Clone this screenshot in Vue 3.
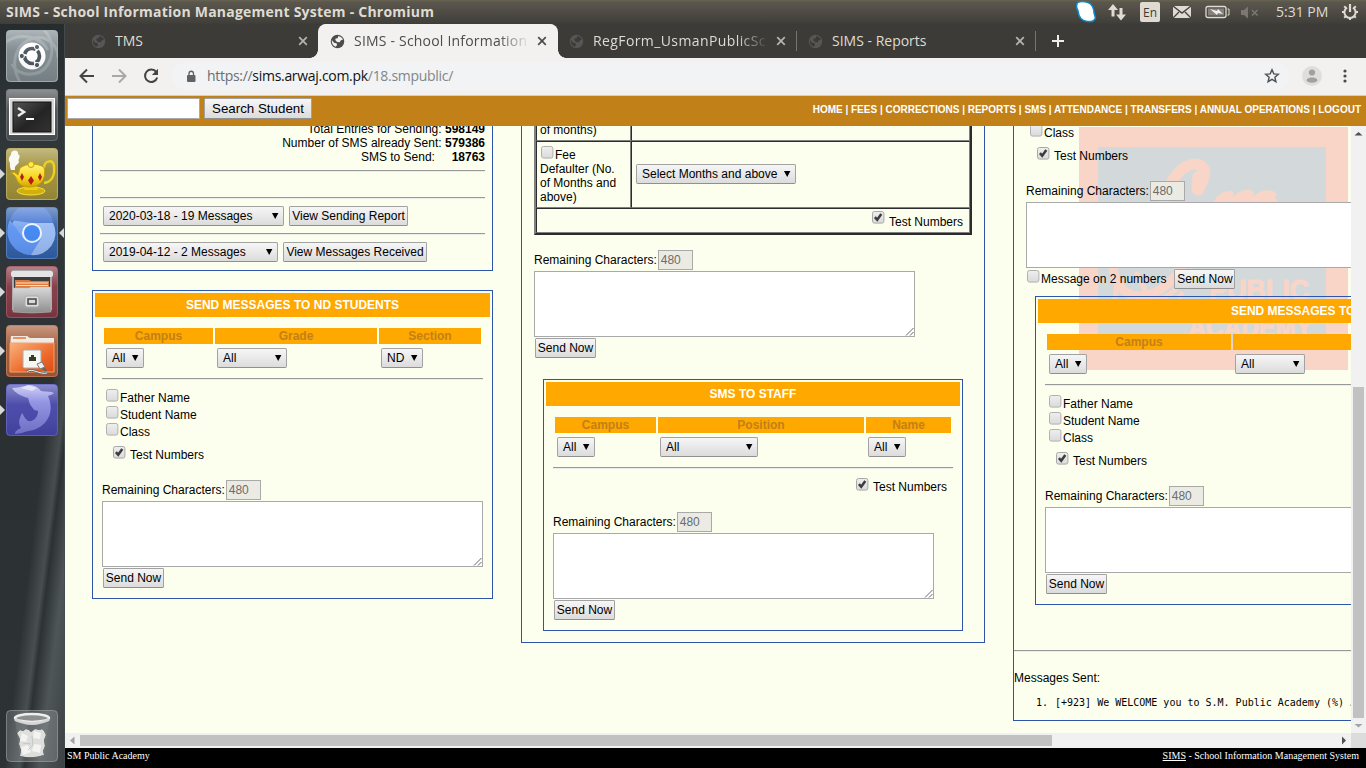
<script setup>
const tabs = [
  { title: 'TMS', cls: 't1' },
  { title: 'SIMS - School Information', cls: 't2', active: true },
  { title: 'RegForm_UsmanPublicSc', cls: 't3', sep: true },
  { title: 'SIMS - Reports', cls: 't4', sep: true }
]
const fields = ['Father Name', 'Student Name', 'Class']
</script>

<template>
  <div class="screen">
    <svg class="defs" width="0" height="0">
      <defs>
        <linearGradient id="gloss" x1="0" y1="0" x2="0" y2="1">
          <stop offset="0" stop-color="#fff" stop-opacity=".38" />
          <stop offset=".4" stop-color="#fff" stop-opacity=".04" />
          <stop offset="1" stop-color="#000" stop-opacity=".08" />
        </linearGradient>
        <linearGradient id="steel" x1="0" y1="0" x2="0" y2="1"><stop offset="0" stop-color="#d9d9d9" /><stop offset="1" stop-color="#8d8d8d" /></linearGradient>
        <linearGradient id="folder" x1="0" y1="0" x2="1" y2="1"><stop offset="0" stop-color="#f9b27c" /><stop offset=".6" stop-color="#ee6a2c" /><stop offset="1" stop-color="#e04a10" /></linearGradient>
        <linearGradient id="gold" x1="0" y1="0" x2="0" y2="1"><stop offset="0" stop-color="#fff27a" /><stop offset=".6" stop-color="#f5d61c" /><stop offset="1" stop-color="#cfa400" /></linearGradient>
        <linearGradient id="term" x1="0" y1="0" x2="1" y2="1"><stop offset="0" stop-color="#555" /><stop offset=".55" stop-color="#242424" /><stop offset="1" stop-color="#333" /></linearGradient>
        <linearGradient id="dol" x1="0" y1="0" x2="0" y2="1"><stop offset="0" stop-color="#cfd0f5" /><stop offset=".35" stop-color="#9394e2" /><stop offset="1" stop-color="#6f6fc4" /></linearGradient>
        <linearGradient id="cbg" x1="0" y1="0" x2="0" y2="1"><stop offset="0" stop-color="#efefef" /><stop offset="1" stop-color="#dadada" /></linearGradient>
        <symbol id="off" viewBox="0 0 13 13"><rect x=".5" y=".5" width="11.4" height="11.6" rx="2" fill="url(#cbg)" stroke="#b0b0b0" /></symbol>
        <symbol id="on" viewBox="0 0 13 13"><rect x=".5" y=".5" width="11.4" height="11.6" rx="2" fill="url(#cbg)" stroke="#a8a8a8" /><path d="M2.9 6.2l2.3 2.5L9.3 3" fill="none" stroke="#3c3c3c" stroke-width="2.5" /></symbol>
        <symbol id="caret" viewBox="0 0 8 8"><path d="M1 1h6.4L4.2 7z" fill="#000" /></symbol>
        <symbol id="grip" viewBox="0 0 9 9"><path d="M1 8.5L8.500 1M5 8.500L8.500 5" stroke="#666" stroke-width="1" /></symbol>
        <symbol id="globe" viewBox="0 0 16 16"><circle cx="8" cy="8" r="7.2" fill="currentColor" /><path d="M8.800 2.200c2.300.3 4.300 1.900 5 4l-2.200.4-1.300 2.200-2.800-.3-1.900-2 .4-1.600 2.200-.4zM1.900 6.400l2.400 2.800 2.700.7.5 1.600-1.200 2.200C3.400 13 1.600 10.300 1.900 6.400z" fill="var(--hole)" /></symbol>
      </defs>
    </svg>

    <header class="panel-top">
      <b class="win-title">SIMS - School Information Management System - Chromium</b>
      <svg class="tray" width="290" height="24" viewBox="0 0 290 24">
        <path d="M1.500 2.500C5 .8 9 1.500 12 2.500c4 1 6 6 6 10l1.500 5.500c-1 3-4 4-8 3.500C5 21 2.500 16 2 11 .3 8 0 5 1.500 2.500z" fill="#fff" stroke="#1383c4" stroke-width="1.600" />
        <path d="M37 4l5 6h-3.500v6.500h-3V10H32zM45 20.500l-5-6h3.500V8h3v6.500H50z" fill="#dfdbd2" />
        <rect x="64" y="2" width="20" height="20" rx="2" fill="#dfdbd2" />
        <rect x="97" y="6" width="18" height="12" fill="#dfdbd2" /><path d="M97 6l9 7 9-7M97 18l6-6M115 18l-6-6" stroke="#46443f" fill="none" stroke-width="1.400" />
        <rect x="130" y="6.500" width="20" height="11" rx="2" fill="none" stroke="#dfdbd2" stroke-width="1.300" /><rect x="132" y="8.500" width="16" height="7" fill="#85827b" /><path d="M151.500 9h1.500v6h-1.500" fill="none" stroke="#dfdbd2" /><path d="M134 9l7 2 1-2 5 5-5-1-1 2z" fill="#eee" />
        <path d="M165 10h3l4-3.500v12l-4-3.500h-3z" fill="#7b7872" /><path d="M176 10l5.500 5.500M181.500 10L176 15.500" stroke="#7b7872" stroke-width="1.500" />
        <g stroke="#dfdbd2" fill="none"><path d="M271 7.600a5.600 5.600 0 1 0 6 0" stroke-width="2" /><path d="M274 4v8" stroke-width="2.200" /><path d="M266 12h2.500M279.500 12h2.500M274 17.500V20M268.200 6.200l1.900 1.900M279.800 6.200l-1.900 1.900M268.200 17.800l1.900-1.900M279.800 17.800l-1.900-1.900" stroke-width="2" /></g>
      </svg>
      <span class="lang">En</span>
      <span class="clock">5:31 PM</span>
    </header>

    <div class="below">
      <aside class="launcher">
        <div class="slot"><svg class="tile" viewBox="0 0 52 52"><rect width="52" height="52" rx="4" fill="#7d888d" /><path d="M14 52C4 34 8 14 28 8c14-3 24 8 24 20M38 0c12 12 10 34-4 42-12 5-24 1-28-8M0 12c14-10 34-6 42 8" fill="none" stroke="#a5b0b4" stroke-width="3" opacity=".6" /><circle cx="26" cy="26" r="13.500" fill="#fff" /><circle cx="26" cy="26" r="7.500" fill="none" stroke="#46525a" stroke-width="3.600" stroke-dasharray="13.700 2" stroke-dashoffset="6" /><g fill="#46525a" stroke="#fff" stroke-width="1"><circle cx="15.800" cy="26" r="2.600" /><circle cx="31" cy="17" r="2.600" /><circle cx="31" cy="35" r="2.600" /></g><rect x=".5" y=".5" width="51" height="51" rx="4" fill="url(#gloss)" stroke="#b0babd" stroke-opacity=".7" /></svg></div>
        <div class="slot"><svg class="tile" viewBox="0 0 52 52"><rect width="52" height="52" rx="4" fill="#4b5052" /><rect width="52" height="52" rx="4" fill="url(#gloss)" /><rect x="3" y="9" width="46" height="37" rx="1" fill="#d8d8d8" /><rect x="3.500" y="9.500" width="45" height="36" fill="none" stroke="#fff" /><rect x="7" y="13" width="38" height="30" fill="url(#term)" stroke="#111" /><path d="M12 19l6 4-6 4" fill="none" stroke="#eee" stroke-width="2.500" /><path d="M20 30h8" stroke="#fff" stroke-width="2" /><rect x=".5" y=".5" width="51" height="51" rx="4" fill="none" stroke="#777c7e" stroke-opacity=".6" /></svg></div>
        <div class="slot run"><svg class="tile" viewBox="0 0 52 52"><rect width="52" height="52" rx="4" fill="#9f8f38" /><rect x=".5" y=".5" width="51" height="51" rx="4" fill="url(#gloss)" stroke="#c5b76d" stroke-opacity=".7" /><path d="M38 20c0-8 10-9 10-2 1 9-2 16-10 17" fill="none" stroke="#eed020" stroke-width="2.500" /><ellipse cx="25" cy="43" rx="14" ry="4" fill="#d4ae0a" stroke="#f6df40" /><path d="M20 37h10l2 5H18z" fill="#edce16" /><path d="M14 20c7-5 16-5 24-1 3 12-4 20-14 20-7 0-11-2-13-7-1-3-3-6-6-7l3-1 4 3z" fill="url(#gold)" stroke="#c79e09" /><circle cx="25" cy="16.500" r="3" fill="#ffe94d" stroke="#c79e09" /><path d="M16 25l2 4-2 4-2-4zM25 28l3 4.500-3 4.500-3-4.500zM34 25l2 4-2 4-2-4z" fill="#b71e12" /><path d="M5 22c-2-4 0-6-2-9-1-5 3-5 2-8 2-4 8-3 7 1 4 3-1 5 1 8-1 3-5 3-4 8z" fill="#fff" opacity=".93" /></svg></div>
        <div class="slot run"><svg class="tile" viewBox="0 0 52 52"><rect width="52" height="52" rx="4" fill="#315fa8" /><circle cx="26" cy="26" r="22" fill="#79a5ed" /><path d="M4 13A22 22 0 0 1 47 16H26z" fill="#4273d2" /><path d="M4 13a24 24 0 0 0 21 35l9-15-16-1z" fill="#5c93f2" /><path d="M26 16h21a22 22 0 0 1-22 32l10-16z" fill="#98baf3" /><circle cx="26" cy="26" r="10" fill="#eef4ff" /><circle cx="26" cy="26" r="8" fill="#3f86f4" /><rect x=".5" y=".5" width="51" height="51" rx="4" fill="url(#gloss)" stroke="#789cd4" stroke-opacity=".5" /></svg><i class="focus"></i></div>
        <div class="slot run"><svg class="tile" viewBox="0 0 52 52"><rect width="52" height="52" rx="4" fill="#823744" /><rect x=".5" y=".5" width="51" height="51" rx="4" fill="url(#gloss)" stroke="#ae6771" stroke-opacity=".6" /><path d="M6 5q0-1 2-1h36q2 0 2 2v38H6z" fill="#aaa" /><rect x="5" y="5" width="42" height="6" rx="2" fill="#e4e4e4" /><rect x="8" y="11" width="36" height="12" fill="#3d3d3d" /><path d="M9 14h14l2 1h18v8H9z" fill="#de783a" /><path d="M10 17h32M10 19.500h32" stroke="#fae5c9" stroke-width="1.200" /><path d="M7 22h16l2-1h20v25q-19 2-38 0z" fill="url(#steel)" stroke="#bbb" stroke-width=".5" /><rect x="19" y="30" width="14" height="11" rx="2" fill="#ddd" stroke="#aaa" /><rect x="22" y="33" width="8" height="5" fill="#d9d9d9" stroke="#444" stroke-width="1.500" /></svg></div>
        <div class="slot run"><svg class="tile" viewBox="0 0 52 52"><rect width="52" height="52" rx="4" fill="#a45a36" /><rect x=".5" y=".5" width="51" height="51" rx="4" fill="url(#gloss)" stroke="#c98a68" stroke-opacity=".6" /><path d="M5 11h16l3 2h24v8H4z" fill="#eeeae6" /><path d="M7 13h13" stroke="#ee905a" stroke-width="2" /><path d="M4 18h44v29H4z" fill="url(#folder)" stroke="#f3a273" /><rect x="17" y="25" width="18" height="18" rx="1.500" fill="#f5f5f2" stroke="#aaa" /><path d="M23 36v-4h2v-2h3v2h2v4z" fill="#3a3a2b" /><path d="M21 47c5-5 12 3 20 1M36 41l4 5" stroke="#666" stroke-width="2.500" fill="none" /><path d="M21 47c5-5 12 3 20 1" stroke="#eee" fill="none" /><path d="M31 39l5-2 3 5-5 2z" fill="#eee" stroke="#777" /></svg></div>
        <div class="slot run"><svg class="tile" viewBox="0 0 52 52"><rect width="52" height="52" rx="4" fill="#4545a8" /><rect x=".5" y=".5" width="51" height="51" rx="4" fill="url(#gloss)" stroke="#7878d2" stroke-opacity=".5" /><path d="M6 4c4 0 8-1 13-2 8-2 13 1 16 5 5 1 10 0 13 2-2 2-5 2-6 3 6 13 2 27-12 33-5 2-10 2-14 4l-7 1c0-3 2-4 6-6-3-5-2-9 1-15 2 3 3 6 6 8 6 1 10-4 10-10-2-1-3 1-6-4-3-3-3-7-4-9C15 12 9 9 6 4z" fill="url(#dol)" /><path d="M15 4l7-3 9 3-5 3z" fill="#f0f0fa" opacity=".7" /></svg></div>
        <div class="slot trash"><svg class="tile" viewBox="0 0 52 52"><rect x=".5" y=".5" width="51" height="51" rx="4" fill="#fff" fill-opacity=".17" stroke="#abb1b3" stroke-opacity=".55" /><path d="M9 10h34l-5 36q-12 3-24 0z" fill="#7a8082" opacity=".45" /><path d="M11 23l3-3 3 1 3-2 3 1 2 2 4-3 5 1 2-1 2 2 2 4-2 5 1 6-2 5 1 4q-12 4-24 1l1-6-2-6 1-5z" fill="#deded c" /><path d="M11 23l3-3 3 1 3-2 3 1 2 2 4-3 5 1 2-1 2 2 2 4-2 5 1 6-2 5 1 4q-12 4-24 1l1-6-2-6 1-5z" fill="#dededc" /><path d="M16 23l6 3-2 6-6-1zM28 21l7 2-1 6-7-1zM15 37l7-2 3 7-8 3zM28 34l7 1-1 8-8-2z" fill="#f3f3f1" /><path d="M17 33l8 1M26 26l1 9M22 40l5-5" stroke="#c6c6c2" fill="none" /><ellipse cx="26" cy="8" rx="17" ry="4" fill="#8b8f90" stroke="#eee" stroke-width="2.500" /><path d="M9 9.500q17 8 34 0" stroke="#d5d5d5" stroke-width="3" fill="none" /></svg></div>
      </aside>

      <main class="browser">
        <div class="tabstrip">
          <div v-for="t in tabs" :key="t.title" class="tab" :class="[t.cls, { active: t.active, sep: t.sep }]">
            <svg class="globe" width="15" height="15"><use href="#globe" /></svg>
            <span class="tab-title"><span>{{ t.title }}</span></span>
            <svg class="close" width="10" height="10" viewBox="0 0 10 10"><path d="M1.200 1.200l7.600 7.600M8.800 1.200L1.200 8.800" stroke="currentColor" stroke-width="1.700" /></svg>
          </div>
          <svg class="plus" width="12" height="12" viewBox="0 0 12 12"><path d="M6 0v12M0 6h12" stroke="#eeeeec" stroke-width="2" /></svg>
        </div>

        <div class="toolbar">
          <svg class="nav-ico" width="16" height="16" viewBox="0 0 16 16"><path d="M15 8H2M8 1.500L1.500 8 8 14.500" fill="none" stroke="#454545" stroke-width="2" /></svg>
          <svg class="nav-ico" width="16" height="16" viewBox="0 0 16 16"><path d="M1 8h13M8 1.500L14.500 8 8 14.500" fill="none" stroke="#a8a8a6" stroke-width="2" /></svg>
          <svg class="nav-ico" width="16" height="16" viewBox="0 0 16 16"><path d="M13.300 4.200A6.200 6.200 0 1 0 14.200 9.500" fill="none" stroke="#454545" stroke-width="2" /><path d="M15 .8v6.200H8.800z" fill="#454545" /></svg>
          <div class="omnibox">
            <svg width="10" height="13" viewBox="0 0 10 13"><rect x="1" y="5" width="8.500" height="7" rx="1" fill="#5f6368" /><path d="M3 5V3.500a2.200 2.200 0 0 1 4.500 0V5" fill="none" stroke="#5f6368" stroke-width="1.300" /></svg>
            <span class="url"><i>https://</i><b>sims.arwaj.com.pk</b>/18.smpublic/</span>
            <svg class="star" width="16" height="16" viewBox="0 0 16 16"><path d="M8 1.800l1.800 4.100 4.500.4-3.400 3 1 4.400L8 11.400l-3.900 2.300 1-4.400-3.400-3 4.500-.4z" fill="none" stroke="#505459" stroke-width="1.500" /></svg>
          </div>
          <svg class="avatar" width="20" height="20" viewBox="0 0 20 20"><circle cx="10" cy="10" r="10" fill="#dedede" /><circle cx="10" cy="6.500" r="3.100" fill="#a0a0a0" /><path d="M4.500 14.500c0-4 11-4 11 0-2 3-9 3-11 0z" fill="#a0a0a0" /></svg>
          <svg class="dots" width="4" height="14" viewBox="0 0 4 14"><g fill="#4a4a4a"><circle cx="2" cy="2" r="1.600" /><circle cx="2" cy="7" r="1.600" /><circle cx="2" cy="12" r="1.600" /></g></svg>
        </div>

        <div class="site-bar">
          <span class="search"></span>
          <span class="btn search-btn">Search Student</span>
          <nav>HOME | FEES | CORRECTIONS | REPORTS | SMS | ATTENDANCE | TRANSFERS | ANNUAL OPERATIONS | LOGOUT</nav>
        </div>

        <div class="viewport">
          <div class="page">
            <svg class="watermark" width="269" height="243" viewBox="0 0 269 243">
              <rect width="269" height="243" fill="#f9d5c8" />
              <rect x="19" y="20" width="228" height="196" fill="#d3d9da" />
              <g fill="none" stroke="#f9d5c8">
                <path d="M84 78C90 52 103 37 117 37c10 1 11 11 4 22" stroke-width="11" stroke-linecap="round" />
                <path d="M120 50l-1 12" stroke-width="13" stroke-linecap="round" />
                <path d="M38 153l-3 28M57 145l10 20M46 166c20 13 45 12 68-24M104 165l-5 6" stroke-width="5" />
                <path d="M34 140c3 36 43 42 70-2" stroke-width="9" />
              </g>
              <path d="M133 80c3-11 10-16 18-16 4 0 4 4 2 7 6-6 12-9 18-8 5 1 4 5 2 8 7-7 13-9 20-7 5 1 5 4 3 6l6 10z" fill="#f9d5c8" />
              <text x="130" y="173" textLength="100" lengthAdjust="spacingAndGlyphs" font-size="30" class="wm">PUBLIC</text>
              <text x="109" y="210" textLength="124" lengthAdjust="spacingAndGlyphs" font-size="30" class="wm">ACADEMY</text>
            </svg>

            <div class="col c1">
              <section class="box reports">
                <div class="totals">
                  <p>Total Entries for Sending: <b>598149</b></p>
                  <p>Number of SMS already Sent: <b>579386</b></p>
                  <p>SMS to Send: &nbsp; &nbsp; <b>18763</b></p>
                </div>
                <hr class="r1" /><hr class="r2" />
                <div class="line"><span class="sel w181">2020-03-18 - 19 Messages<svg><use href="#caret" /></svg></span><span class="btn w119">View Sending Report</span></div>
                <hr class="r3" />
                <div class="line"><span class="sel w175">2019-04-12 - 2 Messages<svg><use href="#caret" /></svg></span><span class="btn w144">View Messages Received</span></div>
              </section>

              <section class="box nd">
                <h2>SEND MESSAGES TO ND STUDENTS</h2>
                <div class="heads g-nd"><b>Campus</b><b>Grade</b><b>Section</b></div>
                <div class="sels g-nd"><span class="sel w38">All<svg><use href="#caret" /></svg></span><span class="sel w70">All<svg><use href="#caret" /></svg></span><span class="sel w42">ND<svg><use href="#caret" /></svg></span></div>
                <hr />
                <div class="checks"><label v-for="f in fields" :key="f"><svg class="cb"><use href="#off" /></svg>{{ f }}</label></div>
                <label class="test"><svg class="cb"><use href="#on" /></svg>Test Numbers</label>
                <div class="composer">
                  <div class="remain">Remaining Characters:<span class="num">480</span></div>
                  <div class="area"><svg><use href="#grip" /></svg></div>
                  <span class="btn send">Send Now</span>
                </div>
              </section>
            </div>

            <div class="col c2 box">
              <table>
                <tbody>
                  <tr class="tr1"><td class="lab">of months)</td><td></td></tr>
                  <tr class="tr2"><td class="lab"><svg class="cb"><use href="#off" /></svg>Fee<br />Defaulter (No.<br />of Months and<br />above)</td><td class="pick"><span class="sel w160">Select Months and above<svg><use href="#caret" /></svg></span></td></tr>
                  <tr class="tr3"><td colspan="2"><label class="test"><svg class="cb"><use href="#on" /></svg>Test Numbers</label></td></tr>
                </tbody>
              </table>
              <div class="composer">
                <div class="remain">Remaining Characters:<span class="num">480</span></div>
                <div class="area"><svg><use href="#grip" /></svg></div>
                <span class="btn send">Send Now</span>
              </div>
              <section class="box staff">
                <h2>SMS TO STAFF</h2>
                <div class="heads g-st"><b>Campus</b><b>Position</b><b>Name</b></div>
                <div class="sels g-st"><span class="sel w38">All<svg><use href="#caret" /></svg></span><span class="sel w98">All<svg><use href="#caret" /></svg></span><span class="sel w38">All<svg><use href="#caret" /></svg></span></div>
                <hr />
                <label class="test"><svg class="cb"><use href="#on" /></svg>Test Numbers</label>
                <div class="composer">
                  <div class="remain">Remaining Characters:<span class="num">480</span></div>
                  <div class="area"><svg><use href="#grip" /></svg></div>
                  <span class="btn send">Send Now</span>
                </div>
              </section>
            </div>

            <div class="col c3 box">
              <div class="checks"><label><svg class="cb"><use href="#off" /></svg>Class</label></div>
              <label class="test"><svg class="cb"><use href="#on" /></svg>Test Numbers</label>
              <div class="composer">
                <div class="remain">Remaining Characters:<span class="num">480</span></div>
                <div class="area"></div>
                <div class="two"><svg class="cb"><use href="#off" /></svg><span>Message on 2 numbers</span><span class="btn send">Send Now</span></div>
              </div>
              <section class="box nd wide">
                <h2>SEND MESSAGES TO ND STUDENTS</h2>
                <div class="heads g-wd"><b>Campus</b><b>Grade</b></div>
                <div class="sels g-wd"><span class="sel w38">All<svg><use href="#caret" /></svg></span><span class="sel w70">All<svg><use href="#caret" /></svg></span></div>
                <hr />
                <div class="checks"><label v-for="f in fields" :key="f"><svg class="cb"><use href="#off" /></svg>{{ f }}</label></div>
                <label class="test"><svg class="cb"><use href="#on" /></svg>Test Numbers</label>
                <div class="composer">
                  <div class="remain">Remaining Characters:<span class="num">480</span></div>
                  <div class="area"></div>
                  <span class="btn send">Send Now</span>
                </div>
              </section>
              <hr class="end" />
              <p class="sent">Messages Sent:</p>
              <div class="msg"><span>1.</span><span>[+923] We WELCOME you to S.M. Public Academy (%) J</span></div>
            </div>
          </div>
          <div class="vbar"><svg width="15" height="15"><path d="M3.500 9.500h8L7.500 6z" fill="#505050" /></svg><i></i><svg width="15" height="15"><path d="M3.500 6h8L7.500 9.500z" fill="#a3a3a3" /></svg></div>
        </div>
        <div class="hbar"><svg width="15" height="15"><path d="M9.500 3.500v8L5 7.500z" fill="#a3a3a3" /></svg><i></i><svg class="ra" width="15" height="15"><path d="M6 3.500v8l4-4z" fill="#505050" /></svg><span class="corner"></span></div>
        <footer><span>SM Public Academy</span><span><u>SIMS</u> - School Information Management System</span></footer>
      </main>
    </div>
  </div>
</template>

<style>
body { margin: 0; overflow: hidden; }
</style>

<style scoped>
* { box-sizing: border-box; }
.screen { width: 1366px; height: 768px; overflow: hidden; display: flex; flex-direction: column; font-family: "Liberation Sans", sans-serif; font-size: 12px; line-height: 14px; color: #000; }
.defs { position: absolute; }
.panel-top { position: relative; height: 24px; flex: none; background: linear-gradient(#67654f 0, #5b574e 2px, #403f3a 23px, #3c3b37); color: #dfdbd2; font-family: "Open Sans", sans-serif; display: flex; align-items: center; padding-left: 6px; }
.win-title { font-size: 14px; line-height: 24px; white-space: nowrap; letter-spacing: .23px; }
.tray { position: absolute; left: 1076px; top: 0; }
.lang { position: absolute; left: 1143px; top: 3px; width: 14px; line-height: 19px; font-size: 12px; color: #3c3b37; text-align: center; }
.clock { position: absolute; left: 1276px; line-height: 24px; font-size: 14px; white-space: nowrap; }
.below { flex: 1; display: flex; min-height: 0; }

.launcher { width: 65px; flex: none; display: flex; flex-direction: column; padding: 6px 0 6px 6px; gap: 7px; border-right: 1px solid #454b4d; background: linear-gradient(97deg, transparent 52%, rgba(130,138,140,.32) 64%, transparent 68%, rgba(130,138,140,.4) 80%, rgba(90,98,100,.3)) 0 240px / 65px 504px no-repeat, linear-gradient(#272d2f, #32393c 20%, #2b3133 50%, #2d3335); }
.slot { position: relative; width: 52px; height: 52px; }
.tile { display: block; width: 52px; height: 52px; }
.run::before { content: ""; position: absolute; left: -6px; top: 21px; border: 5px solid transparent; border-left-color: #d8d8d8; border-right: 0; }
.focus { position: absolute; right: -6px; top: 21px; border: 5px solid transparent; border-right-color: #d8d8d8; border-left: 0; }
.trash { margin-top: auto; }

.browser { width: 1301px; display: flex; flex-direction: column; }
.tabstrip { height: 34px; flex: none; background: #3c3b37; padding-left: 14px; display: flex; align-items: center; }
.tab { --hole: #3c3b37; position: relative; width: 239px; height: 34px; display: flex; align-items: center; padding-left: 12px; color: #dfdbd2; }
.tab .globe { color: #565656; flex: none; margin-right: 9px; }
.tab-title { width: 176px; overflow: hidden; white-space: nowrap; font: 14px/34px "Open Sans", sans-serif; }
.t2 .tab-title, .t3 .tab-title { -webkit-mask-image: linear-gradient(90deg, #000 82%, transparent 100%); mask-image: linear-gradient(90deg, #000 82%, transparent 100%); }
.t2 .tab-title { letter-spacing: .2px; }
.t3 .tab-title { letter-spacing: .4px; }
.close { margin-left: 7px; color: #b7b4ac; flex: none; }
.active { --hole: #f2f1f0; background: #f2f1f0; color: #4c4c4c; border-radius: 8px 8px 0 0; box-shadow: 1px 0 #f2f1f0; }
.active .globe, .active .close { color: #4c4c4c; }
.active::before, .active::after { content: ""; position: absolute; bottom: 0; width: 8px; height: 8px; }
.active::before { left: -8px; background: radial-gradient(circle at 0 0, transparent 7.5px, #f2f1f0 8px); }
.active::after { right: -9px; background: radial-gradient(circle at 100% 0, transparent 7.5px, #f2f1f0 8px); }
.sep::after { content: ""; position: absolute; right: -1px; top: 7px; width: 1px; height: 20px; background: #77756f; }
.plus { margin-left: 17px; }
.toolbar { height: 38px; flex: none; background: #f2f1f0; border-bottom: 1px solid #cfcfcd; display: flex; align-items: center; padding: 0 19px 1px 14px; }
.nav-ico { margin-right: 16px; flex: none; }
.omnibox { width: 1119px; height: 28px; margin-left: -3px; border-radius: 14px; background: #f1f3f4; display: flex; align-items: center; padding: 0 10px 0 14px; font: 14px/28px "Open Sans", sans-serif; }
.url { margin-left: 11px; color: #80868b; white-space: nowrap; letter-spacing: -.3px; }
.url i { font-style: normal; color: #6a6e73; }
.url b { font-weight: 400; color: #111; }
.star { margin-left: auto; }
.avatar { margin-left: 12px; }
.dots { margin-left: 21px; }

.site-bar { height: 30px; flex: none; background: #c28018; display: flex; align-items: flex-start; padding: 2px 5px 0 2px; }
.search { width: 133px; height: 21px; background: #fff; border: 1px solid #a9a9a9; }
nav { margin-left: auto; color: #fff; font-weight: 700; font-size: 10px; line-height: 24px; white-space: nowrap; }
.btn, .sel { display: inline-block; height: 20px; line-height: 18px; border: 1px solid #a2a2a2; border-radius: 1.5px; border-bottom-color: #909090; background: linear-gradient(#f6f6f6, #dcdcdc); white-space: nowrap; text-align: center; }
.sel { position: relative; border-radius: 2px; text-align: left; padding-left: 5px; }
.sel svg { position: absolute; right: 4px; top: 5px; width: 8px; height: 8px; }
.search-btn { width: 108px; height: 21px; line-height: 19px; margin-left: 4px; font-size: 13.333px; }

.viewport { height: 607px; flex: none; display: flex; }
.page { position: relative; width: 1286px; height: 607px; overflow: hidden; background: #fcffed; display: flex; align-items: flex-start; padding-left: 27px; }
.watermark { position: absolute; left: 1014px; top: 1px; }
.wm { font-family: "Liberation Sans", sans-serif; font-weight: 700; fill: #f9d5c8; stroke: #f9d5c8; stroke-width: 1px; }
.col { position: relative; flex: none; }
.box { border: 1px solid #2d55a9; }
p { margin: 0; }
hr { border: 0; height: 2px; margin: 0; background: linear-gradient(#999 50%, #ececec 50%); flex: none; }
.c1 { width: 401px; display: flex; flex-direction: column; gap: 19px; }
.reports { height: 145px; border-top: 0; padding: 0 7px; display: flex; flex-direction: column; }
.totals { height: 44px; margin-top: -4px; flex: none; text-align: right; white-space: nowrap; }
.r1 { margin-top: 4px; }
.r2 { margin-top: 25px; }
.r3 { margin: 7px 0; }
.r2 + .line { margin-top: 7px; }
.line { display: flex; gap: 5px; padding-left: 3px; height: 20px; }
.w181 { width: 181px; } .w175 { width: 175px; } .w119 { width: 119px; } .w144 { width: 144px; }
.w38 { width: 38px; } .w70 { width: 70px; } .w42 { width: 42px; } .w98 { width: 98px; } .w160 { width: 160px; }

.nd { height: 309px; padding: 2px; }
h2 { margin: 0; height: 24px; background: #ffa800; color: #fff; font-size: 12px; line-height: 24px; text-align: center; white-space: nowrap; }
.heads { display: grid; gap: 2px; margin: 11px 0 0 9px; height: 16px; }
.heads b { background: #ffa800; color: #c28018; text-align: center; line-height: 16px; }
.sels { display: grid; gap: 2px; margin: 4px 0 0 9px; height: 20px; }
.sels .sel { margin-left: 2px; }
.g-nd { grid-template-columns: 109px 162px 102px; }
.g-st { grid-template-columns: 101px 206px 85px; }
.g-wd { grid-template-columns: 184px 270px; }
.nd hr { margin: 10px 7px 0; }
.nd .checks { margin: 9px 0 0 11px; }
.checks label { display: flex; height: 17px; line-height: 19px; white-space: nowrap; }
.cb { display: block; width: 13px; height: 13px; flex: none; margin-right: 1px; margin-top: 1px; }
.test { display: flex; height: 17px; line-height: 19px; white-space: nowrap; }
.test .cb { margin: 0 4px 0 0; }
.nd .test { margin: 6px 0 0 18px; }
.nd .composer { margin: 17px 0 0 7px; }
.nd .checks .cb { margin-top: 0; }
.composer { height: 108px; }
.remain { display: flex; height: 20px; line-height: 20px; white-space: nowrap; }
.num { width: 35px; height: 20px; margin-left: 1px; border: 1px solid #a9a9a9; background: #ebebe4; color: #6c6c6c; line-height: 18px; padding-left: 2px; }
.area { position: relative; width: 381px; height: 66px; margin: 1px 0; border: 1px solid #a9a9a9; background: #fff; }
.area svg { position: absolute; right: 0; bottom: 0; width: 9px; height: 9px; }
.send { width: 61px; margin-left: 1px; }

.c2 { margin-left: 28px; width: 464px; height: 517px; border-top: 0; padding-left: 12px; }
table { width: 438px; height: 113px; margin-top: -4px; border-spacing: 0; border: 2px solid; border-color: #808080 #2c2c2c #2c2c2c #808080; border-top: 0; table-layout: fixed; }
td { padding: 0 4px; border: 1px solid; border-color: #2c2c2c #808080 #808080 #2c2c2c; vertical-align: middle; }
.lab { width: 95px; padding: 0 0 0 3px; white-space: nowrap; vertical-align: top; }
.tr1 td { height: 19px; border-top: 0; padding-top: 1px; }
.tr2 td { height: 67px; }
.tr2 .lab { padding-top: 6px; }
.tr2 .cb { float: left; margin: -2px 1px 0 1px; }
.pick .sel { display: block; margin-top: -2px; }
.tr3 td { height: 25px; }
td .test { justify-content: flex-end; padding-right: 2px; margin-top: -2px; }
.tr3 .test { line-height: 22px; }
.c2 > .composer { margin-top: 15px; }
.staff { width: 420px; height: 252px; margin: 21px 0 0 9px; padding: 2px; }
.staff hr { margin: 10px 7px 0; }
.staff .test { justify-content: flex-end; margin: 9px 13px 0 0; }
.staff .composer { margin: 17px 0 0 7px; }

.c3 { margin-left: 28px; width: 630px; height: 595px; border-top: 0; }
.c3 > .checks { margin: -3px 0 0 16px; }
.c3 > .checks .cb { margin-top: 1px; }
.c3 > .checks label { line-height: 20px; }
.c3 > .test { margin: 7px 0 0 23px; }
.c3 > .composer { margin: 17px 0 0 12px; }
.two { display: flex; line-height: 20px; white-space: nowrap; }
.two .cb { margin: 1px 1px 0 1px; }
.two .send { margin-left: 8px; }
.wide { width: 605px; margin: 7px 0 0 21px; }
.end { margin-top: 45px; }
.sent { margin-top: 19px; }
.msg { display: flex; margin-top: 11px; padding-left: 22px; font: 10px/14px "DejaVu Sans Mono", monospace; white-space: pre; }
.msg span:first-child { width: 19px; }

.vbar { width: 15px; background: #f1f1f1; display: flex; flex-direction: column; }
.vbar svg, .hbar svg { display: block; flex: none; }
.vbar i { margin: 246px 2px 0; height: 331px; background: #c1c1c1; }
.hbar { height: 15px; flex: none; background: #f1f1f1; display: flex; }
.hbar i { width: 972px; height: 11px; margin-top: 2px; background: #c1c1c1; }
.ra { margin-left: auto; }
.corner { width: 15px; background: #dcdcdc; }
footer { height: 20px; background: #000; color: #fff; display: flex; justify-content: space-between; padding: 0 7px 0 2px; font: 10px/16px "Liberation Serif", serif; }
</style>
